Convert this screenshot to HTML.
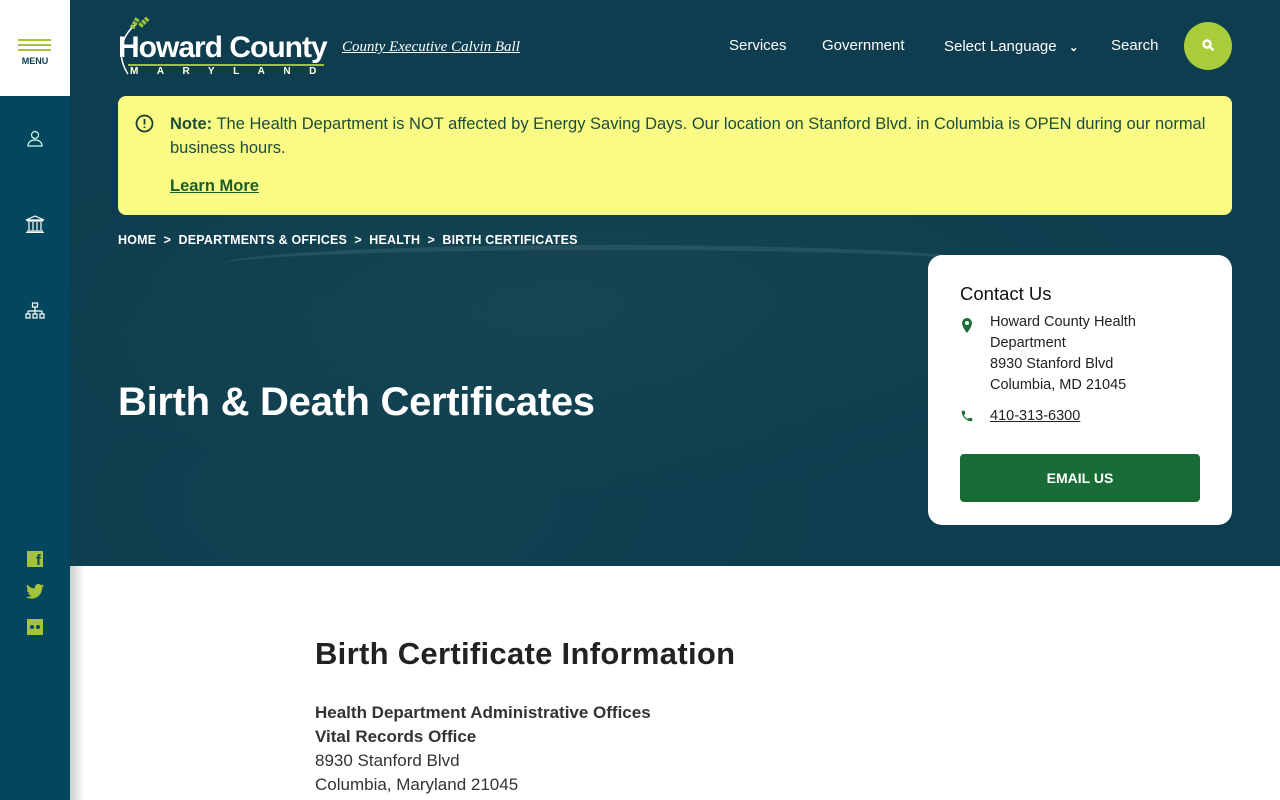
<!DOCTYPE html>
<html><head><meta charset="utf-8"><style>
*{margin:0;padding:0;box-sizing:border-box}
body{width:1280px;height:800px;overflow:hidden;font-family:"Liberation Sans",sans-serif;background:#fff;position:relative}
.side{position:absolute;left:0;top:0;width:70px;height:800px;background:#03475f;z-index:3}
.menu{position:absolute;left:0;top:0;width:70px;height:96px;background:#fff}
.hero{position:absolute;left:70px;top:0;width:1210px;height:566px;background:
radial-gradient(ellipse 600px 200px at 500px 300px,rgba(60,100,100,.18),transparent),
radial-gradient(ellipse 500px 250px at 300px 500px,rgba(30,80,90,.2),transparent),
#0d3d4e}
.road{position:absolute;left:150px;top:245px;width:780px;height:40px;border-top:5px solid rgba(120,150,150,.2);border-radius:50% 50% 0 0}
.shadow{position:absolute;left:70px;top:566px;width:14px;height:234px;background:linear-gradient(90deg,#ccc,#fff)}
.nav a{position:absolute;top:37px;color:#fff;font-size:15px;text-decoration:none}
.alert{position:absolute;left:118px;top:96px;width:1114px;height:119px;background:#f9fb85;border-radius:8px;color:#1c4d3a;font-size:16.5px}
.crumb{position:absolute;left:118px;top:233px;color:#fff;font-size:12.5px;font-weight:bold;letter-spacing:.2px}
.card{position:absolute;left:928px;top:255px;width:304px;height:270px;background:#fff;border-radius:14px}
.card p{font-size:14.5px;color:#222;line-height:21px}
h1{position:absolute;left:118px;top:380px;color:#fff;font-size:40px;font-weight:bold;letter-spacing:-.3px}
h2{position:absolute;left:315px;top:636px;font-size:31px;color:#222;font-weight:bold;letter-spacing:.3px}
.body{position:absolute;left:315px;top:701px;font-size:17px;color:#333;line-height:24px}
</style></head><body>
<div class="hero"><div class="road"></div></div>
<div class="shadow"></div>
<div class="side">
 <div class="menu">
  <div style="position:absolute;left:18px;top:39px;width:33px;height:2px;background:#a5c23b;box-shadow:0 5px 0 #a5c23b,0 10px 0 #a5c23b"></div>
  <div style="position:absolute;left:0;width:70px;top:56px;text-align:center;font-size:9px;font-weight:bold;color:#0b3d4f">MENU</div>
 </div>
 <svg style="position:absolute;left:26px;top:130px" width="18" height="18" fill="none" stroke="#cfe" stroke-width="1.2"><circle cx="9" cy="5" r="3.5"/><path d="M2 16c0-4 3-6 7-6s7 2 7 6z"/></svg>
 <svg style="position:absolute;left:25px;top:215px" width="20" height="18" fill="none" stroke="#fff" stroke-width="1.2"><path d="M1 5l9-4 9 4zM2 6h16M4 7v8M8 7v8M12 7v8M16 7v8M2 16h16M1 17.5h18"/></svg>
 <svg style="position:absolute;left:25px;top:302px" width="20" height="18" fill="none" stroke="#fff" stroke-width="1.2"><rect x="7.5" y="1" width="5" height="4"/><path d="M10 5v4M3 9h14M3 9v3M10 9v3M17 9v3"/><rect x="1" y="12" width="4" height="4"/><rect x="8" y="12" width="4" height="4"/><rect x="15" y="12" width="4" height="4"/></svg>
 <div style="position:absolute;left:27px;top:551px;width:16px;height:16px;background:#a5c23b;color:#03475f;font-weight:bold;font-size:15px;text-align:right;padding-right:2px;line-height:19px">f</div>
 <svg style="position:absolute;left:26px;top:584px" width="18" height="15" viewBox="0 0 24 20"><path fill="#a5c23b" d="M24 2.4a10 10 0 0 1-2.8.8A5 5 0 0 0 23.3.4a10 10 0 0 1-3.1 1.2A4.9 4.9 0 0 0 11.8 6 14 14 0 0 1 1.7.9a4.9 4.9 0 0 0 1.5 6.6A4.9 4.9 0 0 1 1 6.9a4.9 4.9 0 0 0 3.9 4.8 5 5 0 0 1-2.2.1 4.9 4.9 0 0 0 4.6 3.4A9.9 9.9 0 0 1 0 17.3 14 14 0 0 0 7.5 19.5c9 0 14-7.5 14-14v-.6A10 10 0 0 0 24 2.4z"/></svg>
 <div style="position:absolute;left:27px;top:619px;width:16px;height:16px;background:#a5c23b"><i style="position:absolute;left:3px;top:6px;width:4px;height:4px;border-radius:50%;background:#03475f"></i><i style="position:absolute;left:9px;top:6px;width:4px;height:4px;border-radius:50%;background:#03475f"></i></div>
</div>
<svg style="position:absolute;left:116px;top:14px" width="40" height="62" fill="none"><path d="M12 60C2 45 2 25 20 10" stroke="#fff" stroke-width="1.5"/><path d="M16 14l6-10M24 12l8-8" stroke="#9cc43a" stroke-width="5" stroke-dasharray="3 1"/></svg>
<div style="position:absolute;left:118px;top:31px;color:#fff;font-size:30px;font-weight:bold;letter-spacing:-1px">Howard County</div>
<div style="position:absolute;left:128px;top:64px;width:196px;height:2px;background:#9cc43a"></div>
<div style="position:absolute;left:130px;top:66px;color:#fff;font-size:10px;font-weight:bold;letter-spacing:18.5px">MARYLAND</div>
<div style="position:absolute;left:342px;top:39px;color:#fff;font-size:15px;font-style:italic;text-decoration:underline;font-family:'Liberation Serif',serif">County Executive Calvin Ball</div>
<div class="nav"><a style="left:729px">Services</a><a style="left:822px">Government</a><a style="left:944px;top:38px">Select Language &nbsp;&nbsp;<b style="font-size:11px">&#8964;</b></a><a style="left:1111px">Search</a></div>
<div style="position:absolute;left:1184px;top:22px;width:48px;height:48px;border-radius:50%;background:#a9cd3a"><svg style="position:absolute;left:18px;top:17px" width="13" height="13" fill="none" stroke="#fff" stroke-width="2.5"><circle cx="5" cy="5" r="3.5"/><path d="M8 8l3.5 3.5"/></svg></div>
<div class="alert">
 <svg style="position:absolute;left:17px;top:18px" width="19" height="19" fill="none" stroke="#1c3f30" stroke-width="1.8"><circle cx="9.5" cy="9.5" r="8"/><path d="M9.5 5v5.5M9.5 12.5v1.5"/></svg>
 <div style="position:absolute;left:52px;top:16px;width:1040px;line-height:24px"><b>Note:</b> The Health Department is NOT affected by Energy Saving Days. Our location on Stanford Blvd. in Columbia is OPEN during our normal business hours.</div>
 <div style="position:absolute;left:52px;top:81px;font-weight:bold;text-decoration:underline;color:#1b5e2b">Learn More</div>
</div>
<div class="crumb">HOME &nbsp;&gt;&nbsp; DEPARTMENTS &amp; OFFICES &nbsp;&gt;&nbsp; HEALTH &nbsp;&gt;&nbsp; BIRTH CERTIFICATES</div>
<h1>Birth &amp; Death Certificates</h1>
<div class="card">
 <div style="position:absolute;left:32px;top:28px;font-size:18.5px;color:#111">Contact Us</div>
 <svg style="position:absolute;left:33px;top:63px" width="12" height="15"><path fill="#1b6e37" d="M6 0a5 5 0 0 1 5 5c0 4-5 10-5 10S1 9 1 5a5 5 0 0 1 5-5zm0 3a2 2 0 1 0 0 4 2 2 0 0 0 0-4z"/></svg>
 <p style="position:absolute;left:62px;top:57px;width:220px">Howard County Health Department<br>8930 Stanford Blvd<br>Columbia, MD 21045</p>
 <svg style="position:absolute;left:32px;top:154px" width="14" height="14" viewBox="0 0 24 24"><path fill="#1b6e37" d="M6.6 10.8a15 15 0 0 0 6.6 6.6l2.2-2.2a1 1 0 0 1 1-.25 11 11 0 0 0 3.6.6 1 1 0 0 1 1 1V20a1 1 0 0 1-1 1A17 17 0 0 1 3 4a1 1 0 0 1 1-1h3.5a1 1 0 0 1 1 1 11 11 0 0 0 .6 3.6 1 1 0 0 1-.25 1z"/></svg>
 <p style="position:absolute;left:62px;top:151px;text-decoration:underline">410-313-6300</p>
 <div style="position:absolute;left:32px;top:199px;width:240px;height:48px;background:#1a6c37;border-radius:4px;color:#fff;font-weight:bold;font-size:14px;text-align:center;line-height:48px">EMAIL US</div>
</div>
<h2>Birth Certificate Information</h2>
<div class="body"><b>Health Department Administrative Offices<br>Vital Records Office</b><br>8930 Stanford Blvd<br>Columbia, Maryland 21045</div>
</body></html>
